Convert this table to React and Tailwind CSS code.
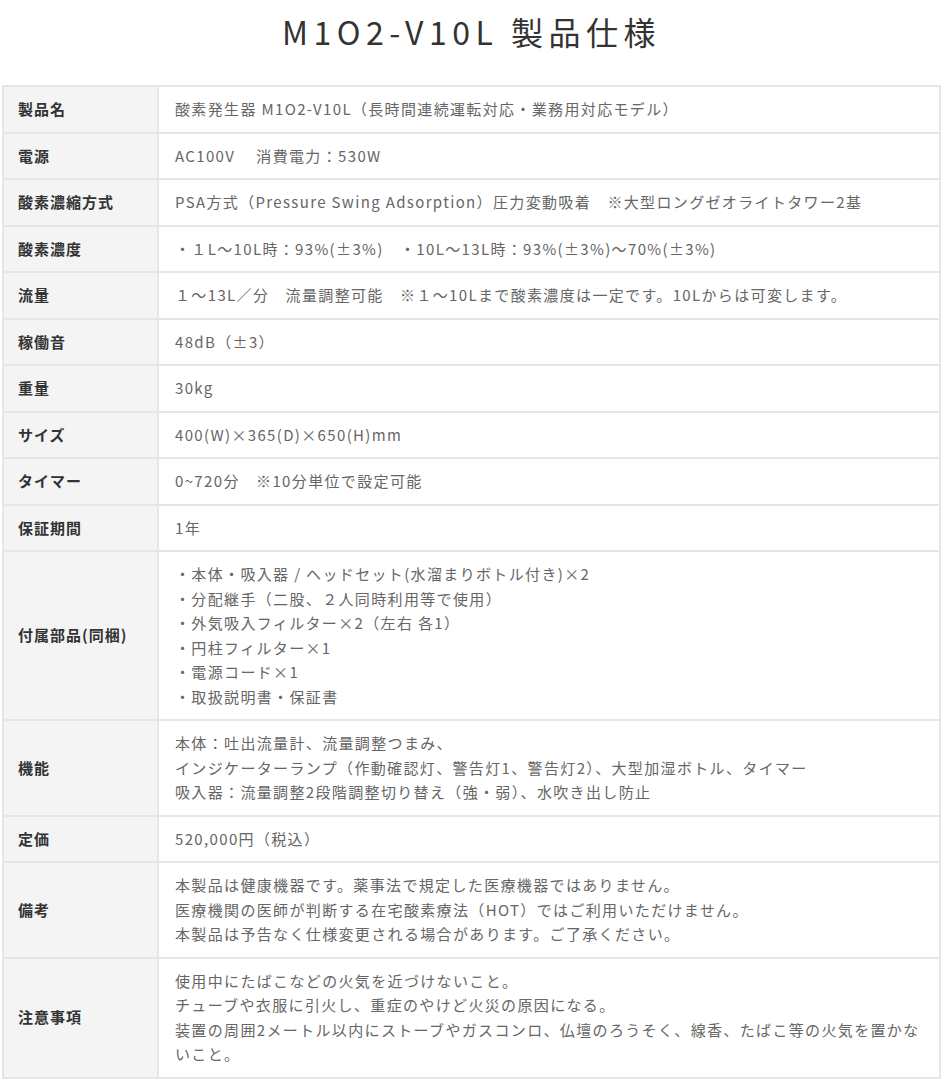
const SPECS = [
  { label: '製品名', lines: ['酸素発生器 M1O2-V10L（長時間連続運転対応・業務用対応モデル）'] },
  { label: '電源', lines: ['AC100V　 消費電力：530W'] },
  { label: '酸素濃縮方式', lines: ['PSA方式（Pressure Swing Adsorption）圧力変動吸着　※大型ロングゼオライトタワー2基'] },
  { label: '酸素濃度', lines: ['・１L～10L時：93%(±3%)　・10L～13L時：93%(±3%)～70%(±3%)'] },
  { label: '流量', lines: ['１～13L／分　流量調整可能　※１～10Lまで酸素濃度は一定です。10Lからは可変します。'] },
  { label: '稼働音', lines: ['48dB（±3）'] },
  { label: '重量', lines: ['30kg'] },
  { label: 'サイズ', lines: ['400(W)×365(D)×650(H)mm'] },
  { label: 'タイマー', lines: ['0~720分　※10分単位で設定可能'] },
  { label: '保証期間', lines: ['1年'] },
  {
    label: '付属部品(同梱)',
    lines: [
      '・本体・吸入器 / ヘッドセット(水溜まりボトル付き)×2',
      '・分配継手（二股、２人同時利用等で使用）',
      '・外気吸入フィルター×2（左右 各1）',
      '・円柱フィルター×1',
      '・電源コード×1',
      '・取扱説明書・保証書',
    ],
  },
  {
    label: '機能',
    lines: [
      '本体：吐出流量計、流量調整つまみ、',
      'インジケーターランプ（作動確認灯、警告灯1、警告灯2）、大型加湿ボトル、タイマー',
      '吸入器：流量調整2段階調整切り替え（強・弱）、水吹き出し防止',
    ],
  },
  { label: '定価', lines: ['520,000円（税込）'] },
  {
    label: '備考',
    lines: [
      '本製品は健康機器です。薬事法で規定した医療機器ではありません。',
      '医療機関の医師が判断する在宅酸素療法（HOT）ではご利用いただけません。',
      '本製品は予告なく仕様変更される場合があります。ご了承ください。',
    ],
  },
  {
    label: '注意事項',
    lines: [
      '使用中にたばこなどの火気を近づけないこと。',
      'チューブや衣服に引火し、重症のやけど火災の原因になる。',
      '装置の周囲2メートル以内にストーブやガスコンロ、仏壇のろうそく、線香、たばこ等の火気を置かな',
      'いこと。',
    ],
  },
];

export default function App() {
  return (
    <div className="min-h-screen bg-white px-[2px] pt-[11px] font-['Noto_Sans_CJK_JP','Noto_Sans',sans-serif]">
      <h1 className="text-center text-[32px] leading-[40px] tracking-[5.5px] font-normal text-[#333] mb-[34px]">
        M1O2-V10L 製品仕様
      </h1>

      <table className="w-full border-collapse text-[15px] tracking-[1.35px]">
        <tbody>
          {SPECS.map(row => (
            <tr key={row.label}>
              <th className="w-[155px] bg-[#f4f4f4] border-2 border-[#e6e6e6] px-[14px] py-[10px] text-left align-middle font-bold text-[#333] leading-[24.5px] whitespace-nowrap tracking-[1px]">
                {row.label}
              </th>
              <td className="border-2 border-[#e6e6e6] pl-[16px] pr-[10px] py-[10px] align-middle text-[#666] leading-[24.5px]">
                {row.lines.map((line, i) => (
                  <div key={i} className="whitespace-nowrap">{line}</div>
                ))}
              </td>
            </tr>
          ))}
        </tbody>
      </table>
    </div>
  );
}
